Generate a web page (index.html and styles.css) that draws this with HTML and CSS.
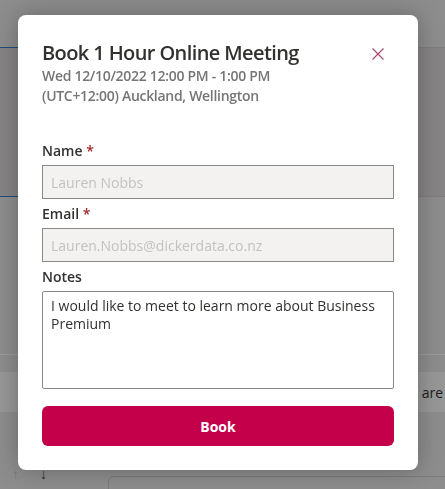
FILE: index.html
```html
<!DOCTYPE html>
<html>
	<head>
		<meta charset="utf-8">
		<title>Book 1 Hour Online Meeting</title>
		<link rel="stylesheet" href="styles.css">
	</head>
	<body>
		<!-- page behind the dialog -->
		<div class="page">
			<div class="topbar"><span class="tab"></span></div>
			<div class="panel"><span class="panel-line"></span></div>
			<div class="content"></div>
			<div class="chat-row"><span class="chat-text">are</span></div>
			<div class="footer">
				<span class="arrow faint">↑</span>
				<span class="arrow">↓</span>
				<span class="input-box"></span>
			</div>
		</div>

		<div class="overlay">
			<div class="dialog">
				<div class="dialog-head">
					<div>
						<h1 class="title">Book 1 Hour Online Meeting</h1>
						<p class="sub">Wed 12/10/2022 12:00 PM - 1:00 PM</p>
						<p class="sub">(UTC+12:00) Auckland, Wellington</p>
					</div>
					<button class="close" aria-label="Close">
						<svg width="12" height="12" viewBox="0 0 12 12">
							<path d="M0.5 0.5 L11.5 11.5 M11.5 0.5 L0.5 11.5" stroke="#a8466f" stroke-width="1.1" fill="none"/>
						</svg>
					</button>
				</div>

				<form class="form">
					<label class="label">Name <span class="req">*</span></label>
					<input class="field" type="text" placeholder="Lauren Nobbs" disabled>

					<label class="label">Email <span class="req">*</span></label>
					<input class="field" type="text" placeholder="Lauren.Nobbs@dickerdata.co.nz" disabled>

					<label class="label">Notes</label>
					<textarea class="notes">I would like to meet to learn more about Business Premium</textarea>

					<button class="book" type="button">Book</button>
				</form>
			</div>
		</div>
	</body>
</html>
```

FILE: styles.css
```css
*{
	box-sizing: border-box;
}
body{
	margin: 0;
	background-color: #8d8d8d;
	font-family: "Open Sans", "Noto Sans", sans-serif;
	overflow: hidden;
	height: 489px;
}

/* 背景页面 */
.page{
	display: flex;
	flex-direction: column;
	height: 489px;
}
.topbar{
	height: 48px;
	border-bottom: 1px solid #7e7e7e;
	display: flex;
	align-items: flex-end;
}
.tab{
	width: 150px;
	height: 1px;
	margin-bottom: -1px;
	background-color: #1f4e78;
}
.panel{
	height: 149px;
	background-color: #868484;
	border-bottom: 1px solid #7e7e7e;
	display: flex;
	align-items: flex-end;
}
.panel-line{
	width: 150px;
	height: 1px;
	margin-bottom: -1px;
	background-color: #1f4e78;
}
.content{
	height: 158px;
	border-bottom: 1px solid #9a9a9a;
}
.chat-row{
	margin-top: 17px;
	height: 40px;
	background-color: #979797;
	display: flex;
	align-items: center;
	justify-content: flex-end;
	padding-right: 2px;
}
.chat-text{
	font-size: 14px;
	color: #1c1c1c;
}
.footer{
	position: relative;
	flex: 1;
}
.arrow{
	position: absolute;
	top: 52px;
	font-size: 14px;
	color: #2a2a2a;
	left: 40px;
}
.arrow.faint{
	left: 12px;
	color: #7a7a7a;
}
.input-box{
	position: absolute;
	left: 108px;
	right: -8px;
	top: 64px;
	height: 30px;
	border: 1px solid #7b7b7b;
	border-radius: 6px;
}

/* 对话框 */
.overlay{
	position: fixed;
	left: 0;
	top: 0;
	width: 100%;
	height: 100%;
}
.dialog{
	position: absolute;
	left: 18px;
	top: 15px;
	width: 400px;
	height: 455px;
	background-color: #fff;
	border-radius: 8px;
	box-shadow: 0 0 24px rgba(0,0,0,0.28);
	padding: 25px 24px 24px;
}
.dialog-head{
	display: flex;
	justify-content: space-between;
	align-items: flex-start;
}
.title{
	margin: 0;
	font-size: 20px;
	font-weight: 600;
	line-height: 26px;
	color: #323130;
	letter-spacing: -0.6px;
}
.sub{
	margin: 0;
	font-size: 14px;
	font-weight: 600;
	line-height: 20px;
	color: #757575;
	letter-spacing: -0.3px;
}
.close{
	border: none;
	background: none;
	padding: 0;
	margin: 8px 10px 0 0;
	width: 12px;
	height: 12px;
	display: flex;
}

.form{
	display: flex;
	flex-direction: column;
	margin-top: 35px;
}
.label{
	font-size: 14px;
	font-weight: 600;
	line-height: 20px;
	color: #323130;
	margin-bottom: 4px;
}
.req{
	color: #a4262c;
}
.field{
	height: 34px;
	margin-bottom: 5px;
	background-color: #f3f2f1;
	border: 1px solid #8a8886;
	padding: 0 8px;
	font-family: inherit;
	font-size: 14px;
}
.field::placeholder{
	color: #c4c2c0;
}
.notes{
	height: 98px;
	resize: none;
	border: 1px solid #8a8886;
	border-radius: 2px;
	padding: 5px 8px;
	font-family: inherit;
	font-size: 14px;
	line-height: 18px;
	color: #323130;
	margin-bottom: 17px;
}
.book{
	height: 40px;
	border: none;
	border-radius: 6px;
	background-color: #c4004a;
	color: #fff;
	font-family: inherit;
	font-size: 14px;
	font-weight: 700;
}
```
